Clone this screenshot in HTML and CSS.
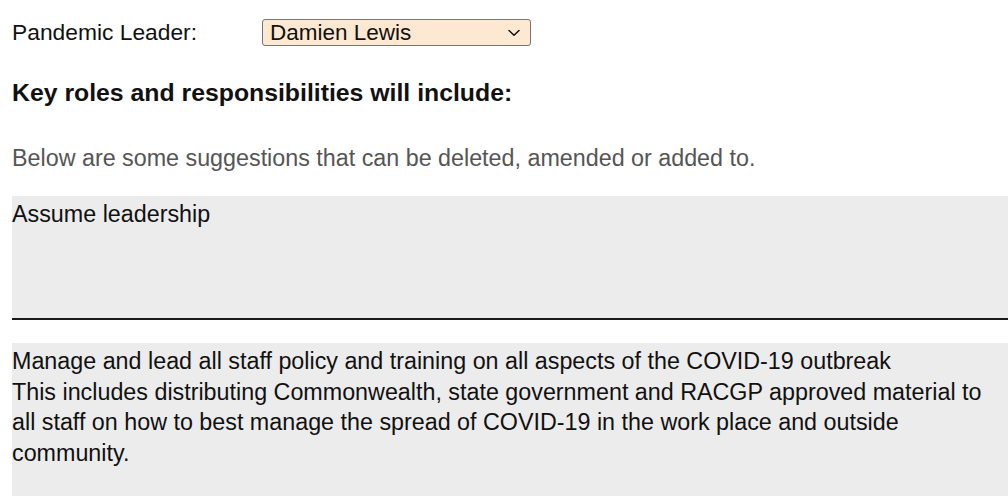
FILE: index.html
```html
<!DOCTYPE html>
<html>
<head>
<meta charset="utf-8">
<link rel="stylesheet" href="styles.css">
</head>
<body>
<div class="page">
  <div class="leader-row">
    <span class="leader-label">Pandemic Leader:</span>
    <div class="select-wrap">
      <select class="leader-select">
        <option>Damien Lewis</option>
      </select>
      <svg class="select-chevron" width="12" height="8" viewBox="0 0 12 8" aria-hidden="true">
        <path d="M1 1.5 L6 6.2 L11 1.5" fill="none" stroke="#111" stroke-width="1.5" stroke-linecap="round" stroke-linejoin="round"/>
      </svg>
    </div>
  </div>
  <h2 class="section-title">Key roles and responsibilities will include:</h2>
  <p class="hint">Below are some suggestions that can be deleted, amended or added to.</p>
  <div class="role-box role-box--first" contenteditable="true">Assume leadership</div>
  <div class="role-box role-box--second" contenteditable="true">Manage and lead all staff policy and training on all aspects of the COVID-19 outbreak<br>This includes distributing Commonwealth, state government and RACGP approved material to all staff on how to best manage the spread of COVID-19 in the work place and outside community.</div>
</div>
</body>
</html>
```

FILE: styles.css
```css
html, body {
  margin: 0;
  padding: 0;
  background: #ffffff;
}

.page {
  padding: 17px 0 0 12px;
  font-family: "Liberation Sans", Arial, sans-serif;
  font-size: 23.3px;
  line-height: 30px;
  color: #111111;
}

.leader-row {
  display: flex;
  align-items: center;
  height: 30px;
}

.leader-label {
  width: 250px;
  font-size: 22.8px;
}

.select-wrap {
  position: relative;
  display: flex;
  margin-top: 1px;
}

.leader-select {
  -webkit-appearance: none;
  appearance: none;
  width: 269px;
  height: 27px;
  margin: 0;
  font-family: "Liberation Sans", Arial, sans-serif;
  font-size: 22.5px;
  line-height: 25px;
  color: #111111;
  background-color: #fde9d1;
  border: 1px solid #767676;
  border-radius: 3px;
  padding: 0 24px 0 7px;
}

.select-chevron {
  position: absolute;
  right: 11px;
  top: 10px;
  pointer-events: none;
}

.section-title {
  margin: 31px 0 0 0;
  font-size: 24.8px;
  font-weight: bold;
  line-height: 30px;
  color: #111111;
}

.hint {
  margin: 35px 0 0 0;
  color: #555555;
}

.role-box {
  background: #ececec;
  outline: none;
  padding-top: 3px;
}

.role-box--first {
  margin-top: 23px;
  min-height: 119px;
  border-bottom: 2px solid #1a1a1a;
}

.role-box--second {
  margin-top: 23px;
  line-height: 30.6px;
  min-height: 152px;
}
```
